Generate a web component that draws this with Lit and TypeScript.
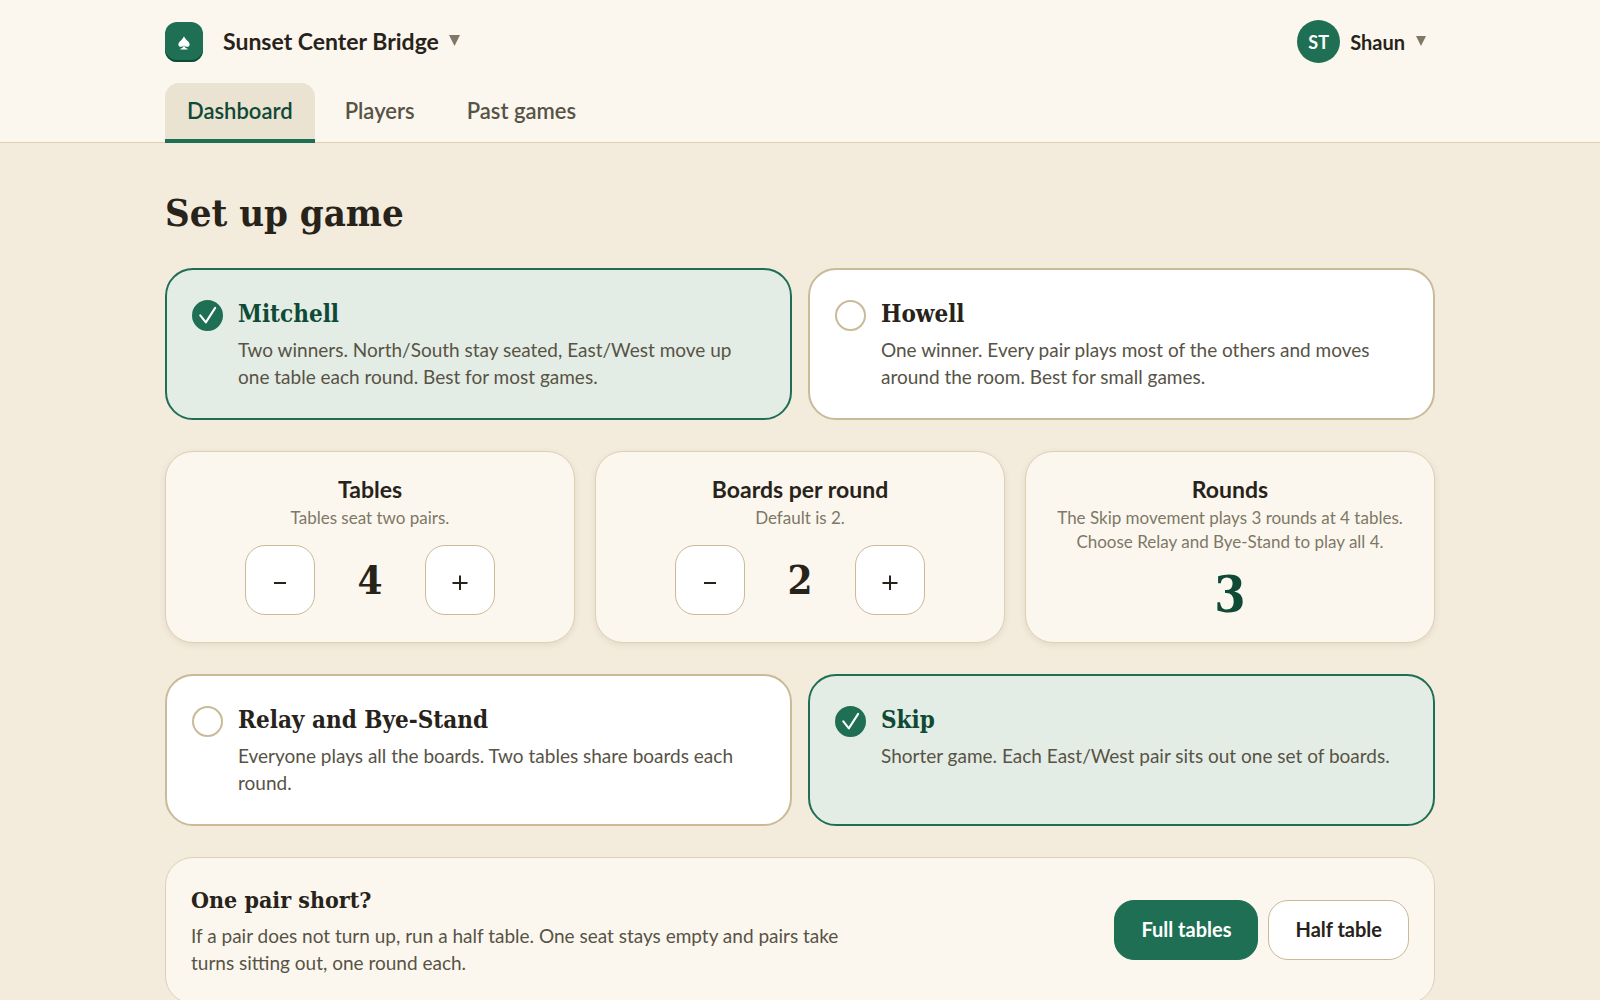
import { LitElement, html, css, svg } from "lit";
import { customElement, property, state } from "lit/decorators.js";
import { classMap } from "lit/directives/class-map.js";

const caret = html`<svg class="caret" viewBox="0 0 11 11" aria-hidden="true">
  <path d="M0 0H11L5.5 11Z" fill="currentColor" />
</svg>`;

const spade = svg`<path
  d="M12 2C12 2 13.2 5 16.2 7.9C18.6 10.2 20.4 11.8 20.4 14.2C20.4 16.4 18.8 17.8 16.8 17.8C15 17.8 13.6 16.9 12.7 15.6C12.8 18 14.2 20 17.4 20.6V21.8H6.6V20.6C9.8 20 11.2 18 11.3 15.6C10.4 16.9 9 17.8 7.2 17.8C5.2 17.8 3.6 16.4 3.6 14.2C3.6 11.8 5.4 10.2 7.8 7.9C10.8 5 12 2 12 2Z"
  fill="#ffffff"
/>`;

@customElement("option-card")
export class OptionCard extends LitElement {
  @property() heading = "";
  @property() detail = "";
  @property() group = "";
  @property({ type: Boolean }) selected = false;

  static styles = css`
    :host {
      display: grid;
    }
    .card {
      box-sizing: border-box;
      display: flex;
      align-items: flex-start;
      gap: 15px;
      padding: 28px 25px;
      border: 2px solid #c9ba98;
      border-radius: 28px;
      background: #ffffff;
      cursor: pointer;
    }
    .card.selected {
      border-color: #1f6f54;
      background: #e4ede5;
    }
    .mark {
      display: grid;
      flex: none;
      margin-top: 2px;
    }
    .radio,
    .tick {
      grid-area: 1 / 1;
      box-sizing: border-box;
      width: 31px;
      height: 31px;
    }
    .radio {
      appearance: none;
      margin: 0;
      border: 2px solid #c9ba98;
      border-radius: 50%;
      background: #ffffff;
    }
    .selected .radio {
      border-color: #1f6f54;
      background: #1f6f54;
    }
    .tick {
      pointer-events: none;
    }
    .words {
      display: grid;
      gap: 6px;
    }
    .heading {
      font: 700 24px/32px "DejaVu Serif Condensed", "DejaVu Serif", serif;
      color: #27231a;
    }
    .selected .heading {
      color: #0f4a36;
    }
    .detail {
      font-size: 19px;
      line-height: 27px;
      color: #575346;
    }
  `;

  private pick() {
    this.dispatchEvent(new CustomEvent("pick", { bubbles: true, composed: true }));
  }

  render() {
    return html`<label class=${classMap({ card: true, selected: this.selected })}>
      <span class="mark">
        <input
          class="radio"
          type="radio"
          name=${this.group}
          .checked=${this.selected}
          @change=${this.pick}
        />
        ${this.selected
          ? html`<svg class="tick" viewBox="0 0 30 30" aria-hidden="true">
              <path
                d="M8 14.8L13.4 21.6L22.4 7.6"
                fill="none"
                stroke="#ffffff"
                stroke-width="2"
                stroke-linecap="round"
                stroke-linejoin="round"
              />
            </svg>`
          : null}
      </span>
      <span class="words">
        <span class="heading">${this.heading}</span>
        <span class="detail">${this.detail}</span>
      </span>
    </label>`;
  }
}

@customElement("app-root")
export class AppRoot extends LitElement {
  @state() private movement = "Mitchell";
  @state() private variant = "Skip";
  @state() private tables = 4;
  @state() private boards = 2;
  @state() private half = false;

  static styles = css`
    :host {
      display: block;
      min-height: 100vh;
      background: #f3ebdc;
      color: #27231a;
      font-family: Lato, "Liberation Sans", sans-serif;
    }
    .wrap {
      box-sizing: border-box;
      max-width: 1310px;
      margin: 0 auto;
      padding: 0 20px;
    }
    .header {
      background: #fcf7ee;
      border-bottom: 1px solid #ddd0b3;
    }
    .bar {
      display: flex;
      align-items: center;
      justify-content: space-between;
      padding: 20px 0;
    }
    .brand {
      display: flex;
      align-items: center;
      gap: 20px;
    }
    .logo {
      display: grid;
      place-items: center;
      box-sizing: border-box;
      width: 38px;
      height: 40px;
      padding-top: 2px;
      border-radius: 12px;
      background: #1f6f54;
      box-shadow: inset 0 -2px 0 #0f4a36;
    }
    .spade {
      width: 16px;
      height: 16px;
    }
    .menu {
      display: flex;
      align-items: center;
      gap: 10px;
      padding: 0;
      border: 0;
      background: none;
      color: #27231a;
      font-family: inherit;
      font-weight: 700;
      cursor: pointer;
    }
    .club {
      padding-bottom: 2px;
      font-size: 23px;
      line-height: 28px;
    }
    .user {
      padding-right: 9px;
      font-size: 20px;
      line-height: 28px;
    }
    .caret {
      width: 11px;
      height: 11px;
      color: #7d7867;
    }
    .user .caret {
      width: 10px;
      height: 10px;
      margin: 0 0 2px 1px;
    }
    .avatar {
      display: grid;
      place-items: center;
      width: 43px;
      height: 43px;
      border-radius: 50%;
      background: #1f6f54;
      color: #ffffff;
      font-size: 18px;
    }
    .tabs {
      display: flex;
      gap: 8px;
      margin-bottom: -1px;
    }
    .tab {
      padding: 14px 22px;
      border-bottom: 4px solid transparent;
      border-radius: 14px 14px 0 0;
      color: #575346;
      font-size: 22px;
      font-weight: 600;
      line-height: 28px;
      text-decoration: none;
    }
    .tab.current {
      border-bottom-color: #1f6f54;
      background: #ebe3d1;
      color: #0f4a36;
    }
    .main {
      display: grid;
      gap: 31px;
      padding-top: 46px;
      padding-bottom: 48px;
    }
    .title {
      margin: 0;
      font: 700 38px/48px "DejaVu Serif Condensed", "DejaVu Serif", serif;
    }
    .pair {
      display: grid;
      grid-template-columns: 1fr 1fr;
      gap: 16px;
    }
    .stats {
      display: grid;
      grid-template-columns: repeat(3, 1fr);
      gap: 20px;
    }
    .stat {
      display: flex;
      flex-direction: column;
      align-items: center;
      padding: 24px 20px 21px;
      border: 1px solid #ddd0b3;
      border-radius: 28px;
      background: #fcf7ee;
      box-shadow: 0 2px 6px rgba(90, 70, 30, 0.1);
      text-align: center;
    }
    .label {
      margin: 0;
      font-size: 23px;
      font-weight: 700;
      line-height: 27px;
    }
    .hint {
      margin: 3px 0 15px;
      color: #7d7867;
      font-size: 17px;
      line-height: 24px;
    }
    .stepper {
      display: flex;
      align-items: center;
      gap: 20px;
    }
    .step {
      display: grid;
      place-items: center;
      width: 70px;
      height: 70px;
      padding: 0;
      border: 1px solid #c9ba98;
      border-radius: 20px;
      background: #ffffff;
      color: #27231a;
      cursor: pointer;
    }
    .sign {
      width: 20px;
      height: 20px;
    }
    .count {
      min-width: 70px;
      font: 700 40px/48px "DejaVu Serif Condensed", "DejaVu Serif", serif;
    }
    .rounds {
      color: #0f4a36;
      font: 700 50px/52px "DejaVu Serif Condensed", "DejaVu Serif", serif;
    }
    .panel {
      display: flex;
      align-items: center;
      justify-content: space-between;
      gap: 24px;
      padding: 26px 25px 27px;
      border: 1px solid #ddd0b3;
      border-radius: 28px;
      background: #fcf7ee;
    }
    .short {
      max-width: 680px;
    }
    .subtitle {
      margin: 0 0 6px;
      font: 700 23px/32px "DejaVu Serif Condensed", "DejaVu Serif", serif;
    }
    .text {
      margin: 0;
      color: #575346;
      font-size: 19px;
      line-height: 27px;
    }
    .choices {
      display: flex;
      gap: 10px;
    }
    .choice {
      padding: 14px 26px 16px;
      border: 1px solid #c9ba98;
      border-radius: 20px;
      background: #ffffff;
      color: #27231a;
      font-family: inherit;
      font-size: 20px;
      font-weight: 700;
      line-height: 28px;
      white-space: nowrap;
      cursor: pointer;
    }
    .choice.on {
      border-color: #1f6f54;
      background: #1f6f54;
      color: #ffffff;
    }
  `;

  private option(group: string, heading: string, detail: string) {
    const current = group === "movement" ? this.movement : this.variant;
    return html`<option-card
      .group=${group}
      .heading=${heading}
      .detail=${detail}
      .selected=${current === heading}
      @pick=${() => {
        if (group === "movement") this.movement = heading;
        else this.variant = heading;
      }}
    ></option-card>`;
  }

  private stepper(label: string, hint: string, value: number, set: (n: number) => void) {
    return html`<section class="stat">
      <h2 class="label">${label}</h2>
      <p class="hint">${hint}</p>
      <div class="stepper">
        <button class="step" aria-label="Fewer" @click=${() => set(Math.max(1, value - 1))}>
          <svg class="sign" viewBox="0 0 20 20" aria-hidden="true">
            <path d="M4 13H16" stroke="currentColor" stroke-width="2" />
          </svg>
        </button>
        <output class="count">${value}</output>
        <button class="step" aria-label="More" @click=${() => set(value + 1)}>
          <svg class="sign" viewBox="0 0 20 20" aria-hidden="true">
            <path d="M2.5 13H17.5M10 5.5V20" stroke="currentColor" stroke-width="2" />
          </svg>
        </button>
      </div>
    </section>`;
  }

  render() {
    const rounds = this.variant === "Skip" ? this.tables - 1 : this.tables;
    return html`
      <header class="header">
        <div class="wrap">
          <div class="bar">
            <div class="brand">
              <span class="logo"><svg class="spade" viewBox="0 0 24 24" aria-hidden="true">${spade}</svg></span>
              <button class="menu club">Sunset Center Bridge ${caret}</button>
            </div>
            <button class="menu user"><span class="avatar">ST</span>Shaun ${caret}</button>
          </div>
          <nav class="tabs">
            <a class="tab current" href="#dashboard">Dashboard</a>
            <a class="tab" href="#players">Players</a>
            <a class="tab" href="#past">Past games</a>
          </nav>
        </div>
      </header>
      <main class="wrap main">
        <h1 class="title">Set up game</h1>
        <div class="pair">
          ${this.option(
            "movement",
            "Mitchell",
            "Two winners. North/South stay seated, East/West move up one table each round. Best for most games."
          )}
          ${this.option(
            "movement",
            "Howell",
            "One winner. Every pair plays most of the others and moves around the room. Best for small games."
          )}
        </div>
        <div class="stats">
          ${this.stepper("Tables", "Tables seat two pairs.", this.tables, (n) => (this.tables = n))}
          ${this.stepper("Boards per round", "Default is 2.", this.boards, (n) => (this.boards = n))}
          <section class="stat">
            <h2 class="label">Rounds</h2>
            <p class="hint">
              The Skip movement plays ${this.tables - 1} rounds at ${this.tables} tables.<br />
              Choose Relay and Bye-Stand to play all ${this.tables}.
            </p>
            <output class="rounds">${rounds}</output>
          </section>
        </div>
        <div class="pair">
          ${this.option(
            "variant",
            "Relay and Bye-Stand",
            "Everyone plays all the boards. Two tables share boards each round."
          )}
          ${this.option(
            "variant",
            "Skip",
            "Shorter game. Each East/West pair sits out one set of boards."
          )}
        </div>
        <section class="panel">
          <div class="short">
            <h2 class="subtitle">One pair short?</h2>
            <p class="text">
              If a pair does not turn up, run a half table. One seat stays empty and pairs take turns
              sitting out, one round each.
            </p>
          </div>
          <div class="choices">
            <button
              class=${classMap({ choice: true, on: !this.half })}
              @click=${() => (this.half = false)}
            >Full tables</button>
            <button
              class=${classMap({ choice: true, on: this.half })}
              @click=${() => (this.half = true)}
            >Half table</button>
          </div>
        </section>
      </main>
    `;
  }
}
